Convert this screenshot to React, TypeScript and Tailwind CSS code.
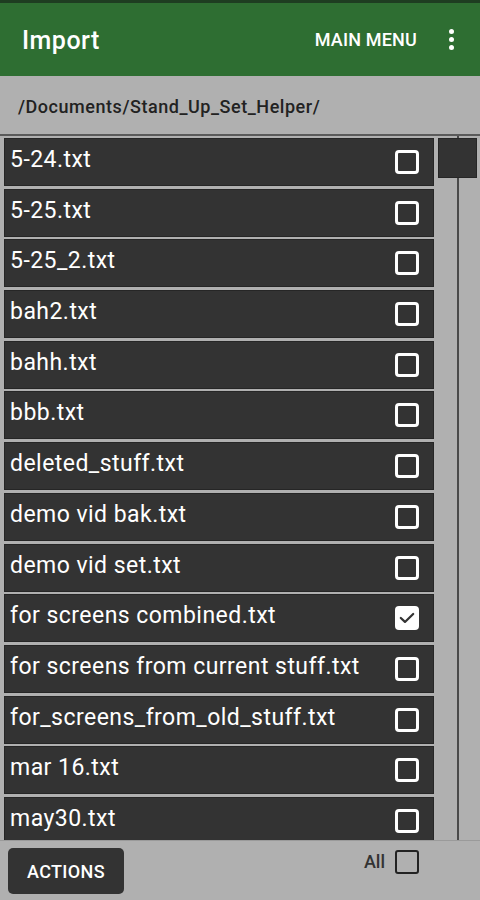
const files = [
  "5-24.txt",
  "5-25.txt",
  "5-25_2.txt",
  "bah2.txt",
  "bahh.txt",
  "bbb.txt",
  "deleted_stuff.txt",
  "demo vid bak.txt",
  "demo vid set.txt",
  "for screens combined.txt",
  "for screens from current stuff.txt",
  "for_screens_from_old_stuff.txt",
  "mar 16.txt",
  "may30.txt",
];

function Box({ checked }: { checked: boolean }) {
  if (checked) {
    return (
      <div className="w-[24px] h-[24px] rounded-[4px] bg-white flex items-center justify-center">
        <svg width="18" height="18" viewBox="0 0 16 16" fill="none">
          <path d="M2.5 8 L6.2 11.5 L13.5 4.5" stroke="#333" strokeWidth="2" strokeLinecap="round" strokeLinejoin="round" />
        </svg>
      </div>
    );
  }
  return <div className="w-[24px] h-[24px] rounded-[4px] border-[3px] border-white" />;
}

export default function App() {
  return (
    <div
      className="w-[480px] h-[900px] flex flex-col bg-[#b0b0b0] overflow-hidden"
      style={{ fontFamily: "Roboto, 'Liberation Sans', sans-serif" }}
    >
      <div className="h-[3px] bg-[#1e3d21]" />
      <header className="h-[73px] bg-[#2e6e32] flex items-center text-white">
        <h1 className="pl-[22px] pt-[2px] text-[25px] tracking-[0.02em] font-medium flex-1">Import</h1>
        <span className="text-[18px] tracking-[0.01em] font-medium mr-[32px]">MAIN MENU</span>
        <div className="flex flex-col gap-[3px] items-center mr-[26px]">
          <span className="w-[5px] h-[5px] rounded-full bg-white" />
          <span className="w-[5px] h-[5px] rounded-full bg-white" />
          <span className="w-[5px] h-[5px] rounded-full bg-white" />
        </div>
      </header>
      <div className="h-[58px] flex items-center pl-[18px] pt-[3px] text-[18px] tracking-[0.03em] font-medium text-[#222]">
        /Documents/Stand_Up_Set_Helper/
      </div>
      <div className="flex-1 flex border-t-2 border-[#5a5a5a] overflow-hidden">
        <div className="w-[436px] pl-[4px] pr-[2px] pt-[2px] flex flex-col gap-[2.7px]">
          {files.map((f) => (
            <div
              key={f}
              className="h-[48px] shrink-0 bg-[#333333] border border-[#262626] flex items-center justify-between pl-[5px] pr-[14px]"
            >
              <span className="self-start pt-[7px] text-[23px] tracking-[0.02em] text-white leading-[28px] whitespace-nowrap">
                {f}
              </span>
              <Box checked={f === "for screens combined.txt"} />
            </div>
          ))}
        </div>
        <div className="flex-1 relative">
          <div className="absolute left-[21px] top-0 bottom-0 w-[2px] bg-[#4a4a4a]" />
          <div className="absolute left-[2px] top-[2px] w-[39px] h-[40px] bg-[#333333] border border-[#262626]" />
        </div>
      </div>
      <div className="h-[60px] flex items-start justify-between px-[8px] pt-[7px] border-t border-[#9a9a9a]">
        <button className="w-[116px] h-[46px] rounded-[5px] bg-[#333333] text-white text-[18px] tracking-[0.02em] font-medium">
          ACTIONS
        </button>
        <div className="flex items-center gap-[10px] pr-[53px]">
          <span className="text-[18px] text-[#333] font-medium">All</span>
          <div className="w-[24px] h-[24px] rounded-[3px] border-2 border-[#222]" />
        </div>
      </div>
    </div>
  );
}
